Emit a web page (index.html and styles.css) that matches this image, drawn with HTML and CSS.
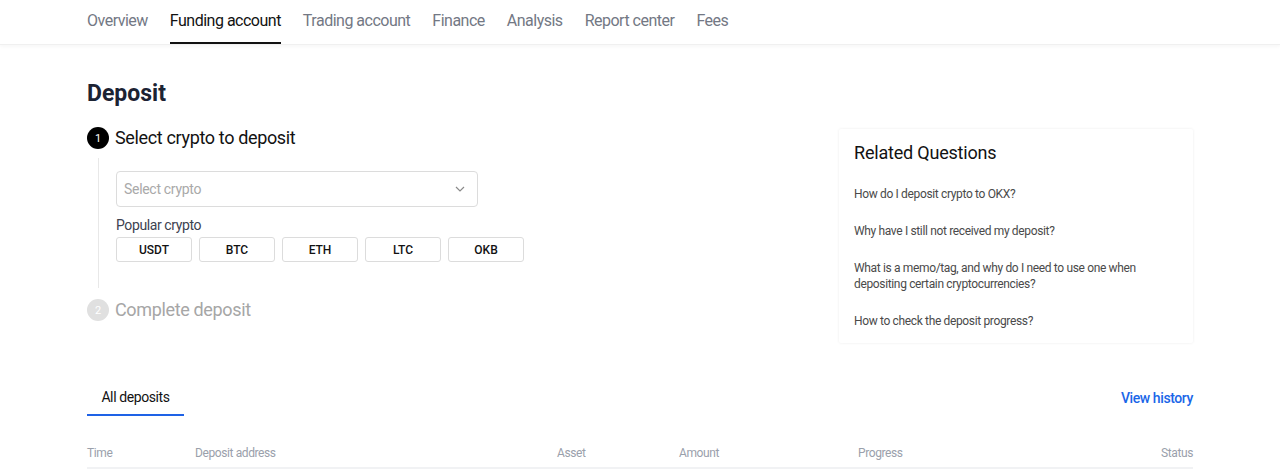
FILE: index.html
```html
<!DOCTYPE html>
<html>
<head>
<meta charset="utf-8">
<link rel="stylesheet" href="styles.css">
</head>
<body>
<nav class="topnav">
  <div class="nav-inner">
    <a class="nav-item">Overview</a>
    <a class="nav-item active">Funding account</a>
    <a class="nav-item">Trading account</a>
    <a class="nav-item">Finance</a>
    <a class="nav-item">Analysis</a>
    <a class="nav-item">Report center</a>
    <a class="nav-item">Fees</a>
  </div>
</nav>
<main class="page">
  <h1 class="title">Deposit</h1>
  <div class="main-row">
    <section class="steps">
      <div class="step-head">
        <span class="step-num">1</span>
        <span class="step-title">Select crypto to deposit</span>
      </div>
      <div class="step-body">
        <div class="select">
          <span class="placeholder">Select crypto</span>
          <svg class="chev" width="10" height="6" viewBox="0 0 10 6"><path d="M1 1l4 4 4-4" fill="none" stroke="#8a8a8a" stroke-width="1.2"/></svg>
        </div>
        <div class="popular-label">Popular crypto</div>
        <div class="coins">
          <button class="coin">USDT</button>
          <button class="coin">BTC</button>
          <button class="coin">ETH</button>
          <button class="coin">LTC</button>
          <button class="coin">OKB</button>
        </div>
      </div>
      <div class="step-head step-disabled">
        <span class="step-num">2</span>
        <span class="step-title">Complete deposit</span>
      </div>
    </section>
    <aside class="faq">
      <h2 class="faq-title">Related Questions</h2>
      <a class="faq-q">How do I deposit crypto to OKX?</a>
      <a class="faq-q">Why have I still not received my deposit?</a>
      <a class="faq-q">What is a memo/tag, and why do I need to use one when depositing certain cryptocurrencies?</a>
      <a class="faq-q">How to check the deposit progress?</a>
    </aside>
  </div>
  <div class="history-bar">
    <div class="tab active">All deposits</div>
    <a class="view-history">View history</a>
  </div>
  <div class="table-head">
    <span class="c-time">Time</span>
    <span class="c-addr">Deposit address</span>
    <span class="c-asset">Asset</span>
    <span class="c-amount">Amount</span>
    <span class="c-progress">Progress</span>
    <span class="c-status">Status</span>
  </div>
</main>
</body>
</html>
```
FILE: styles.css
```css
* { box-sizing: border-box; }
html, body { margin: 0; padding: 0; background: #fff; }
body {
  font-family: Roboto, "Noto Sans", "Liberation Sans", sans-serif;
  color: #1a1a1a;
  overflow: hidden;
}
a { text-decoration: none; }

.topnav {
  height: 45px;
  border-bottom: 1px solid #f0f0f0;
  box-shadow: 0 2px 3px rgba(0,0,0,0.03);
}
.nav-inner {
  display: flex;
  gap: 22px;
  padding-left: 87px;
  height: 44px;
}
.nav-item {
  font-size: 16px;
  color: #737884;
  line-height: 42px;
  height: 44px;
  letter-spacing: -0.5px;
  border-bottom: 2px solid transparent;
}
.nav-item.active {
  color: #121212;
  border-bottom-color: #121212;
}

.page {
  padding: 0 87px;
}
.title {
  margin: 36px 0 0;
  font-size: 23px;
  line-height: 26px;
  font-weight: 700;
  color: #1c2333;
}
.main-row {
  display: flex;
  justify-content: space-between;
  align-items: flex-start;
}
.steps { width: 440px; margin-top: 19px; }
.step-head {
  display: flex;
  align-items: center;
  gap: 6px;
  height: 24px;
}
.step-num {
  width: 22px; height: 22px;
  border-radius: 50%;
  background: #000;
  color: #fff;
  font-size: 11px;
  display: flex; align-items: center; justify-content: center;
}
.step-title { font-size: 18px; color: #121212; letter-spacing: -0.35px; line-height: 22px; }
.step-disabled .step-num { background: #e0e0e0; }
.step-disabled .step-title { color: #a6a6a6; }

.step-body {
  margin: 8px 0 10px 11px;
  border-left: 1px solid #e8e8e8;
  padding: 13px 0 26px 17px;
}
.select {
  width: 362px;
  height: 36px;
  border: 1px solid #dcdcdc;
  border-radius: 4px;
  display: flex;
  align-items: center;
  justify-content: space-between;
  padding: 0 12px 0 7px;
}
.placeholder { font-size: 14px; color: #a9a9a9; letter-spacing: -0.3px; }
.popular-label {
  margin-top: 9px;
  font-size: 14px;
  line-height: 18px;
  color: #3d4250;
  letter-spacing: -0.4px;
}
.coins { display: flex; gap: 7px; margin-top: 3px; }
.coin {
  width: 76px;
  height: 25px;
  border: 1px solid #dcdcdc;
  border-radius: 3px;
  background: #fff;
  font-family: inherit;
  font-size: 12px;
  font-weight: 500;
  color: #121212;
  padding: 0;
}

.faq {
  width: 354px;
  margin-top: 22px;
  padding: 12px 15px 14px;
  box-shadow: 0 0 3px rgba(0,0,0,0.08);
  border-radius: 2px;
}
.faq-title {
  margin: 0 0 21px;
  font-size: 18px;
  line-height: 24px;
  font-weight: 400;
  color: #121212;
  letter-spacing: -0.2px;
}
.faq-q {
  display: block;
  font-size: 12px;
  line-height: 16px;
  color: #4a4a4a;
  margin-bottom: 21px;
  letter-spacing: -0.35px;
}
.faq-q:last-child { margin-bottom: 0; }

.history-bar {
  margin-top: 38px;
  display: flex;
  justify-content: space-between;
  align-items: flex-start;
}
.tab {
  width: 97px;
  text-align: center;
  font-size: 14px;
  line-height: 20px;
  padding: 6px 0 7px;
  color: #121212;
  border-bottom: 2px solid #1e62e6;
  letter-spacing: -0.4px;
}
.view-history {
  font-size: 14px;
  font-weight: 500;
  color: #1a66e8;
  line-height: 20px;
  padding-top: 7px;
  letter-spacing: -0.4px;
}
.table-head {
  margin-top: 31px;
  display: flex;
  font-size: 12px;
  color: #9aa0ab;
  height: 22px;
  border-bottom: 2px solid #f1f2f4;
  line-height: 12px;
  letter-spacing: -0.4px;
}
.c-time { width: 108px; }
.c-addr { width: 362px; }
.c-asset { width: 122px; }
.c-amount { width: 179px; }
.c-progress { flex: 1; }
.c-status { text-align: right; }
```
